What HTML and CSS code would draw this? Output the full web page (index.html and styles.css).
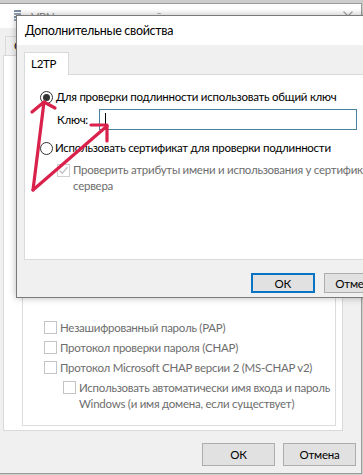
FILE: index.html
```html
<!DOCTYPE html>
<html lang="ru">
<head>
    <meta charset="UTF-8">
    <meta name="viewport" content="width=device-width, initial-scale=1.0">
    <title>Дополнительные свойства</title>
    <link rel="stylesheet" href="styles.css">
</head>
<body>
    <div class="desk">
        <!-- окно на заднем плане -->
        <div class="win back">
            <div class="titlebar">
                <svg class="win-icon" width="7" height="13" viewBox="0 0 7 13">
                    <rect x="0" y="0" width="7" height="2" fill="#7d8fa6"/>
                    <rect x="0" y="3" width="7" height="2" fill="#94a3b6"/>
                    <rect x="0" y="6" width="7" height="2" fill="#7d8fa6"/>
                    <rect x="0" y="9" width="7" height="2" fill="#94a3b6"/>
                    <rect x="2" y="11" width="3" height="2" fill="#6b7a8c"/>
                </svg>
                <span class="title">VPN-подключение: свойства</span>
                <svg class="close" width="10" height="10" viewBox="0 0 10 10">
                    <path d="M0.5 0.5 L9.5 9.5 M9.5 0.5 L0.5 9.5" stroke="#a8a8a8" stroke-width="1.2"/>
                </svg>
            </div>
            <div class="tabs">
                <span class="tab">Общие</span>
            </div>
            <div class="panel">
                <div class="group">
                    <div class="row"><span class="box"></span>Незашифрованный пароль (PAP)</div>
                    <div class="row"><span class="box"></span>Протокол проверки пароля (CHAP)</div>
                    <div class="row"><span class="box"></span>Протокол Microsoft CHAP версии 2 (MS-CHAP v2)</div>
                    <div class="row sub"><span class="box"></span><span>Использовать автоматически имя входа и пароль<br>Windows (и имя домена, если существует)</span></div>
                </div>
            </div>
            <div class="buttons">
                <button class="btn">ОК</button>
                <button class="btn">Отмена</button>
            </div>
        </div>

        <!-- диалог "Дополнительные свойства" -->
        <div class="win dlg">
            <div class="titlebar">
                <span class="title">Дополнительные свойства</span>
            </div>
            <div class="dlg-body">
                <div class="tabs">
                    <span class="tab active">L2TP</span>
                </div>
                <div class="panel">
                    <div class="opt">
                        <span class="radio on"></span>
                        <span>Для проверки подлинности использовать общий ключ</span>
                    </div>
                    <div class="key">
                        <span class="key-label">Ключ:</span>
                        <div class="input"><span class="caret"></span></div>
                    </div>
                    <div class="opt opt2">
                        <span class="radio"></span>
                        <span>Использовать сертификат для проверки подлинности</span>
                    </div>
                    <div class="opt check">
                        <span class="box checked">
                            <svg width="11" height="11" viewBox="0 0 11 11"><path d="M1.5 5.5 L4.2 8.2 L9.5 2.2" fill="none" stroke="#c2c2c2" stroke-width="1.3"/></svg>
                        </span>
                        <span>Проверить атрибуты имени и использования у сертификата<br>сервера</span>
                    </div>
                </div>
                <div class="buttons">
                    <button class="btn focus">ОК</button>
                    <button class="btn">Отмена</button>
                </div>
            </div>
        </div>

        <!-- стрелки -->
        <svg class="arrows" width="363" height="475" viewBox="0 0 363 475">
            <g fill="none" stroke="#d9214b" stroke-width="3.2" stroke-linecap="round" stroke-linejoin="round">
                <path d="M33 190 L44 102"/>
                <path d="M32 112 L44 102 L55 108"/>
                <path d="M33 190 L107 126"/>
                <path d="M91 125 L107 125 L107 141"/>
            </g>
        </svg>
    </div>
</body>
</html>
```

FILE: styles.css
```css
html,body{
    margin:0;
    padding:0;
}
body{
    width:363px;
    height:475px;
    overflow:hidden;
    background:#cdcdcd;
    font-family:"Lato", "Roboto", sans-serif;
    font-size:11.5px;
    letter-spacing:-0.25px;
    color:#000;
}
.desk{
    position:relative;
    width:363px;
    height:475px;
}
.win{
    box-sizing:border-box;
    background:#f0f0f0;
}
.titlebar{
    display:flex;
    align-items:center;
    background:#fff;
    white-space:nowrap;
}

/* back window */
.back{
    position:absolute;
    left:-10px;
    top:3px;
    width:372px;
    border:1px solid #9b9b9b;
    display:flex;
    flex-direction:column;
}
.back .titlebar{
    height:24px;
    padding-left:23px;
}
.back .title{
    margin-left:10px;
    color:#8a8a8a;
    font-size:12px;
}
.back .close{
    margin-left:auto;
    margin-right:8px;
}
.back .tabs{
    height:27px;
    display:flex;
    align-items:flex-end;
    padding-left:14px;
}
.back .tab{
    height:18px;
    padding:0 8px;
    border:1px solid #d9d9d9;
    border-bottom:none;
    background:#f0f0f0;
    line-height:18px;
}
.back .panel{
    height:376px;
    margin:0 18px 0 12px;
    box-sizing:border-box;
    border:1px solid #d9d9d9;
    background:#fff;
    display:flex;
    flex-direction:column;
    justify-content:flex-end;
}
.group{
    height:170px;
    box-sizing:border-box;
    margin:0 6px 4px 18px;
    padding:0 0 13px 21px;
    border:1px solid #dcdcdc;
    display:flex;
    flex-direction:column;
    justify-content:flex-end;
    gap:4px;
    color:#6d6d6d;
    white-space:nowrap;
}
.row{
    display:flex;
    align-items:flex-start;
    gap:3px;
    line-height:16px;
}
.row .box{
    margin-top:1px;
}
.row.sub{
    margin-left:19px;
}
.box{
    flex:none;
    width:13px;
    height:13px;
    box-sizing:border-box;
    border:1px solid #c4c4c4;
    background:#fff;
    display:grid;
    place-items:center;
}
.back .buttons{
    display:flex;
    justify-content:flex-end;
    gap:8px;
    padding:12px 5px 7px 0;
}
.btn{
    box-sizing:border-box;
    width:73px;
    height:23px;
    padding:0;
    border:1px solid #adadad;
    background:#e1e1e1;
    font-family:inherit;
    font-size:11.5px;
    letter-spacing:inherit;
    color:#000;
}

/* dialog */
.dlg{
    position:absolute;
    left:16px;
    top:15px;
    width:372px;
    height:283px;
    border:1px solid #7a7a7a;
    box-shadow:0 0 7px rgba(0,0,0,.28);
    display:flex;
    flex-direction:column;
}
.dlg .titlebar{
    height:29px;
    padding-left:8px;
    font-size:12.5px;
    letter-spacing:-0.3px;
}
.dlg-body{
    flex:1;
    padding:7px 0 0 7px;
    display:flex;
    flex-direction:column;
}
.dlg .tabs{
    display:flex;
}
.dlg .tab{
    box-sizing:border-box;
    width:45px;
    height:23px;
    padding-left:6px;
    border:1px solid #d9d9d9;
    border-bottom:none;
    background:#fff;
    line-height:21px;
    margin-bottom:-1px;
    position:relative;
}
.dlg .panel{
    height:186px;
    box-sizing:border-box;
    border:1px solid #d9d9d9;
    border-right:none;
    background:#fff;
    padding:14px 0 0 15px;
    white-space:nowrap;
}
.opt{
    display:flex;
    align-items:center;
    gap:3px;
    line-height:16px;
}
.opt2{
    margin-top:10px;
    gap:2px;
}
.check{
    align-items:flex-start;
    margin:6px 0 0 17px;
    color:#6d6d6d;
}
.check .box{
    margin-top:2px;
    border-color:#cfcfcf;
}
.radio{
    flex:none;
    width:13px;
    height:13px;
    box-sizing:border-box;
    border:1px solid #333;
    border-radius:50%;
    background:#fff;
    display:grid;
    place-items:center;
}
.radio.on::after{
    content:"";
    width:7px;
    height:7px;
    border-radius:50%;
    background:#333;
}
.key{
    display:flex;
    align-items:center;
    margin-top:4px;
    padding-left:17px;
}
.key-label{
    width:42px;
}
.input{
    box-sizing:border-box;
    width:258px;
    height:21px;
    border:1px solid #4682a0;
    background:#fff;
    display:flex;
    align-items:center;
    padding-left:5px;
}
.caret{
    width:1px;
    height:14px;
    background:#000;
}
.dlg .buttons{
    display:flex;
    gap:9px;
    padding:13px 0 0 227px;
}
.dlg .btn{
    width:74px;
    height:20px;
}
.btn.focus{
    border:2px solid #0a74c4;
}

.arrows{
    position:absolute;
    left:0;
    top:0;
    pointer-events:none;
}
```
